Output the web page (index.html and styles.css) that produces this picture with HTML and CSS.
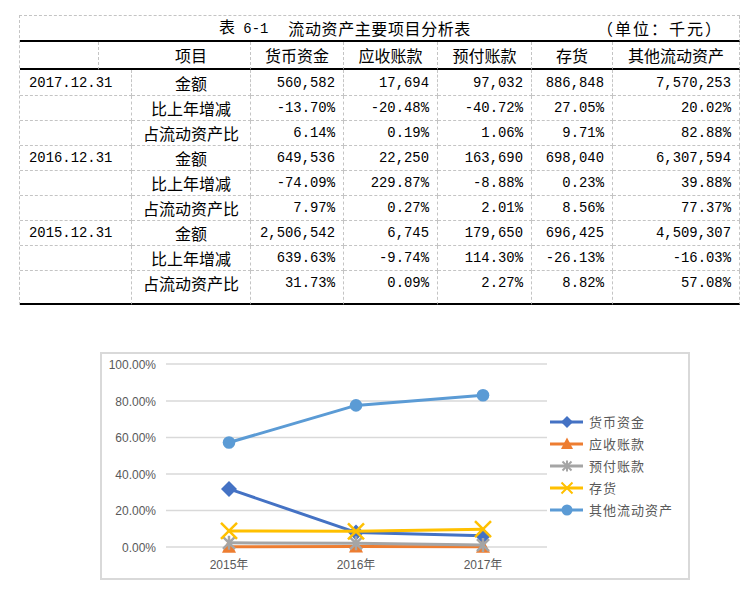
FILE: index.html
```html
<!DOCTYPE html>
<html lang="zh-CN">
<head>
<meta charset="utf-8">
<title>流动资产主要项目分析表</title>
<link rel="stylesheet" href="styles.css">
</head>
<body>
<div class="sheet">
  <div class="cell title span8">
    <span class="t-no">表<span class="num"> 6-1</span></span>
    <span class="t-name">流动资产主要项目分析表</span>
    <span class="t-unit">（单位：千元）</span>
  </div>

  <div class="cell head"></div>
  <div class="cell head center span2 item">项目</div>
  <div class="cell head center">货币资金</div>
  <div class="cell head center">应收账款</div>
  <div class="cell head center">预付账款</div>
  <div class="cell head center">存货</div>
  <div class="cell head center">其他流动资产</div>

  <div class="cell first date span2"><span class="num">2017.12.31</span></div>
  <div class="cell first center">金额</div>
  <div class="cell first r num">560,582</div>
  <div class="cell first r num">17,694</div>
  <div class="cell first r num">97,032</div>
  <div class="cell first r num">886,848</div>
  <div class="cell first r num">7,570,253</div>

  <div class="cell date span2"></div>
  <div class="cell center">比上年增减</div>
  <div class="cell r num">-13.70%</div>
  <div class="cell r num">-20.48%</div>
  <div class="cell r num">-40.72%</div>
  <div class="cell r num">27.05%</div>
  <div class="cell r num">20.02%</div>

  <div class="cell date span2"></div>
  <div class="cell center">占流动资产比</div>
  <div class="cell r num">6.14%</div>
  <div class="cell r num">0.19%</div>
  <div class="cell r num">1.06%</div>
  <div class="cell r num">9.71%</div>
  <div class="cell r num">82.88%</div>

  <div class="cell date span2"><span class="num">2016.12.31</span></div>
  <div class="cell center">金额</div>
  <div class="cell r num">649,536</div>
  <div class="cell r num">22,250</div>
  <div class="cell r num">163,690</div>
  <div class="cell r num">698,040</div>
  <div class="cell r num">6,307,594</div>

  <div class="cell date span2"></div>
  <div class="cell center">比上年增减</div>
  <div class="cell r num">-74.09%</div>
  <div class="cell r num">229.87%</div>
  <div class="cell r num">-8.88%</div>
  <div class="cell r num">0.23%</div>
  <div class="cell r num">39.88%</div>

  <div class="cell date span2"></div>
  <div class="cell center">占流动资产比</div>
  <div class="cell r num">7.97%</div>
  <div class="cell r num">0.27%</div>
  <div class="cell r num">2.01%</div>
  <div class="cell r num">8.56%</div>
  <div class="cell r num">77.37%</div>

  <div class="cell date span2"><span class="num">2015.12.31</span></div>
  <div class="cell center">金额</div>
  <div class="cell r num">2,506,542</div>
  <div class="cell r num">6,745</div>
  <div class="cell r num">179,650</div>
  <div class="cell r num">696,425</div>
  <div class="cell r num">4,509,307</div>

  <div class="cell date span2"></div>
  <div class="cell center">比上年增减</div>
  <div class="cell r num">639.63%</div>
  <div class="cell r num">-9.74%</div>
  <div class="cell r num">114.30%</div>
  <div class="cell r num">-26.13%</div>
  <div class="cell r num">-16.03%</div>

  <div class="cell last date span2"></div>
  <div class="cell last center top">占流动资产比</div>
  <div class="cell last r num top">31.73%</div>
  <div class="cell last r num top">0.09%</div>
  <div class="cell last r num top">2.27%</div>
  <div class="cell last r num top">8.82%</div>
  <div class="cell last r num top">57.08%</div>
</div>

<svg class="chart" width="590" height="228" viewBox="100 352 590 228" xmlns="http://www.w3.org/2000/svg">
  <rect x="101" y="353" width="588" height="226" fill="#ffffff" stroke="#d9d9d9" stroke-width="2"/>
  <g stroke="#d9d9d9" stroke-width="1.5">
    <line x1="166" x2="547" y1="364" y2="364"/>
    <line x1="166" x2="547" y1="401" y2="401"/>
    <line x1="166" x2="547" y1="437.5" y2="437.5"/>
    <line x1="166" x2="547" y1="474" y2="474"/>
    <line x1="166" x2="547" y1="510.5" y2="510.5"/>
    <line x1="166" x2="547" y1="547" y2="547"/>
  </g>
  <g class="ytick" text-anchor="end">
    <text x="156" y="368.5">100.00%</text>
    <text x="156" y="405.5">80.00%</text>
    <text x="156" y="442">60.00%</text>
    <text x="156" y="478.5">40.00%</text>
    <text x="156" y="515">20.00%</text>
    <text x="156" y="551.5">0.00%</text>
  </g>
  <g class="xtick" text-anchor="middle">
    <text x="229" y="569">2015年</text>
    <text x="356" y="569">2016年</text>
    <text x="483" y="569">2017年</text>
  </g>

  <!-- 货币资金 -->
  <g fill="#4472c4" stroke="#4472c4">
    <polyline points="229,488.9 356,532.4 483,535.8" fill="none" stroke-width="3" stroke-linejoin="round"/>
    <polygon points="229,480.9 237,488.9 229,496.9 221,488.9" stroke="none"/>
    <polygon points="356,524.4 364,532.4 356,540.4 348,532.4" stroke="none"/>
    <polygon points="483,527.8 491,535.8 483,543.8 475,535.8" stroke="none"/>
  </g>
  <!-- 应收账款 -->
  <g fill="#ed7d31" stroke="#ed7d31">
    <polyline points="229,546.8 356,546.5 483,546.7" fill="none" stroke-width="3"/>
    <polygon points="229,538.8 236,552.8 222,552.8" stroke="none"/>
    <polygon points="356,538.5 363,552.5 349,552.5" stroke="none"/>
    <polygon points="483,538.7 490,552.7 476,552.7" stroke="none"/>
  </g>
  <!-- 预付账款 -->
  <g stroke="#a5a5a5">
    <polyline points="229,542.8 356,543.3 483,545.1" fill="none" stroke-width="3"/>
    <g stroke-width="2.5">
      <path d="M223,536.8 L235,548.8 M223,548.8 L235,536.8 M229,535.8 L229,549.8"/>
      <path d="M350,537.3 L362,549.3 M350,549.3 L362,537.3 M356,536.3 L356,550.3"/>
      <path d="M477,539.1 L489,551.1 M477,551.1 L489,539.1 M483,538.1 L483,552.1"/>
    </g>
  </g>
  <!-- 存货 -->
  <g stroke="#ffc000">
    <polyline points="229,530.9 356,531.3 483,529.2" fill="none" stroke-width="3"/>
    <g stroke-width="2.5">
      <path d="M221,522.9 L237,538.9 M221,538.9 L237,522.9"/>
      <path d="M348,523.3 L364,539.3 M348,539.3 L364,523.3"/>
      <path d="M475,521.2 L491,537.2 M475,537.2 L491,521.2"/>
    </g>
  </g>
  <!-- 其他流动资产 -->
  <g fill="#5b9bd5" stroke="#5b9bd5">
    <polyline points="229,442.5 356,405.4 483,395.3" fill="none" stroke-width="3" stroke-linejoin="round"/>
    <circle cx="229" cy="442.5" r="6.3" stroke="none"/>
    <circle cx="356" cy="405.4" r="6.3" stroke="none"/>
    <circle cx="483" cy="395.3" r="6.3" stroke="none"/>
  </g>

  <!-- legend -->
  <g class="legend">
    <line x1="550" x2="583" y1="422" y2="422" stroke="#4472c4" stroke-width="3"/>
    <polygon points="567,416 573,422 567,428 561,422" fill="#4472c4"/>
    <text x="589" y="426.5">货币资金</text>

    <line x1="550" x2="583" y1="444" y2="444" stroke="#ed7d31" stroke-width="3"/>
    <polygon points="567,437.5 573,449 561,449" fill="#ed7d31"/>
    <text x="589" y="448.5">应收账款</text>

    <line x1="550" x2="583" y1="466" y2="466" stroke="#a5a5a5" stroke-width="3"/>
    <path d="M562.5,461.5 L571.5,470.5 M562.5,470.5 L571.5,461.5 M567,460.5 L567,471.5" stroke="#a5a5a5" stroke-width="2"/>
    <text x="589" y="470.5">预付账款</text>

    <line x1="550" x2="583" y1="488" y2="488" stroke="#ffc000" stroke-width="3"/>
    <path d="M561.5,482.5 L572.5,493.5 M561.5,493.5 L572.5,482.5" stroke="#ffc000" stroke-width="2"/>
    <text x="589" y="492.5">存货</text>

    <line x1="550" x2="583" y1="510" y2="510" stroke="#5b9bd5" stroke-width="3"/>
    <circle cx="567" cy="510" r="5.5" fill="#5b9bd5"/>
    <text x="589" y="514.5">其他流动资产</text>
  </g>
</svg>
</body>
</html>
```

FILE: styles.css
```css
html, body {
  margin: 0;
  padding: 0;
  background: #ffffff;
}

body {
  font-family: "Noto Sans CJK SC", "Noto Sans CJK JP", sans-serif;
  color: #000000;
}

.sheet {
  margin: 15px 0 0 19px;
  width: 721px;
  box-sizing: border-box;
  display: grid;
  grid-template-columns: 79px 33px 119px 93px 94px 94px 81px 127px;
  grid-template-rows: 26px 28px 26px repeat(7, 25px) 34px;
  border-top: 1px dashed #c4c4c4;
  border-left: 1px dashed #c4c4c4;
}

.cell {
  box-sizing: border-box;
  border-right: 1px dashed #c4c4c4;
  border-bottom: 1px dashed #c4c4c4;
  display: flex;
  align-items: center;
  font-size: 16px;
  line-height: 20px;
  white-space: nowrap;
}

.span2 { grid-column: span 2; }
.span8 { grid-column: span 8; }

.title {
  border-bottom: 2px solid #000000;
  padding: 0 16px 1px 199px;
}

.t-no { margin-right: 20px; }
.t-name { letter-spacing: 0.6px; }
.t-unit {
  margin-left: auto;
  letter-spacing: 2px;
}

.head {
  border-bottom: 2px solid #000000;
  padding-bottom: 1px;
}

.item { padding-left: 33px; }

.last {
  border-bottom: 2px solid #000000;
  align-items: flex-start;
  padding-top: 2px;
}

.center { justify-content: center; }

.r {
  justify-content: flex-end;
  padding-right: 8px;
}

.date { padding-left: 9px; }

.num {
  font-family: "Liberation Mono", monospace;
  font-size: 13.9px;
}

.chart {
  display: block;
  margin: 47px 0 0 100px;
}

.ytick text,
.xtick text {
  font-family: "Liberation Sans", "Noto Sans CJK SC", sans-serif;
  font-size: 12px;
  fill: #595959;
}

.legend text {
  font-family: "Noto Sans CJK SC", sans-serif;
  font-size: 13px;
  letter-spacing: 1px;
  fill: #595959;
}
```
